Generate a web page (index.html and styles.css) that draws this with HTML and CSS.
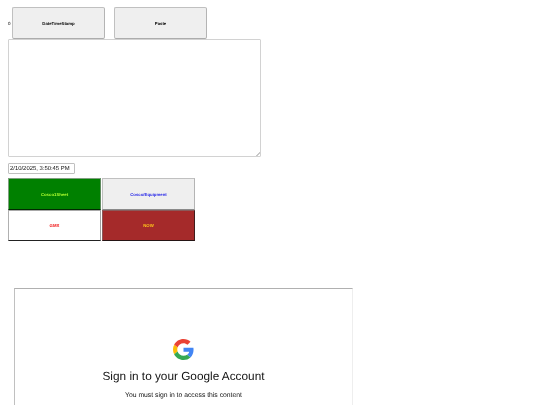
FILE: index.html
```html
<!DOCTYPE html>
<html lang="en">
<head>
<meta charset="utf-8">
<title>Tools</title>
<link rel="stylesheet" href="styles.css">
</head>
<body>
<main class="page">
  <div class="top-row">
    <span class="counter">0</span>
    <button class="btn btn-top">DateTimeStamp</button>
    <button class="btn btn-top">Paste</button>
  </div>
  <textarea class="notes"></textarea>
  <input class="stamp" type="text" value="2/10/2025, 3:50:45 PM">
  <div class="grid">
    <button class="btn cell green">Cosco1Sheet</button>
    <button class="btn cell grey">Cosco/Equipment</button>
    <button class="btn cell white">GMX</button>
    <button class="btn cell brown">NOW</button>
  </div>
  <section class="frame">
    <svg class="logo" viewBox="0 0 48 48" aria-hidden="true">
      <path fill="#EA4335" d="M24 9.5c3.54 0 6.71 1.22 9.21 3.6l6.85-6.85C35.9 2.38 30.47 0 24 0 14.62 0 6.51 5.38 2.56 13.22l7.98 6.19C12.43 13.72 17.74 9.5 24 9.5z"/>
      <path fill="#4285F4" d="M46.98 24.55c0-1.57-.15-3.09-.38-4.55H24v9.02h12.94c-.58 2.96-2.26 5.48-4.78 7.18l7.73 6c4.51-4.18 7.09-10.36 7.09-17.65z"/>
      <path fill="#FBBC05" d="M10.53 28.59c-.48-1.45-.76-2.99-.76-4.59s.27-3.14.76-4.59l-7.98-6.19C.92 16.46 0 20.12 0 24c0 3.88.92 7.54 2.56 10.78l7.97-6.19z"/>
      <path fill="#34A853" d="M24 48c6.48 0 11.93-2.13 15.89-5.81l-7.73-6c-2.15 1.45-4.92 2.3-8.16 2.3-6.26 0-11.57-4.22-13.47-9.91l-7.98 6.19C6.51 42.62 14.62 48 24 48z"/>
    </svg>
    <h1 class="title">Sign in to your Google Account</h1>
    <p class="sub">You must sign in to access this content</p>
  </section>
</main>
</body>
</html>
```
FILE: styles.css
```css
html, body {
  margin: 0;
  padding: 0;
  background: #fff;
  height: 405px;
  overflow: hidden;
}
body {
  font-family: "Liberation Sans", Arial, sans-serif;
  text-rendering: geometricPrecision;
}
.page {
  display: flex;
  flex-direction: column;
  align-items: flex-start;
  height: 405px;
  box-sizing: border-box;
  padding: 7px 0 0 8px;
  filter: blur(0.5px);
}
.top-row {
  display: flex;
  align-items: center;
  height: 32px;
}
.counter {
  font-size: 4.5px;
  width: 4px;
}
.btn {
  font-family: "Liberation Sans", Arial, sans-serif;
  font-size: 4.3px;
  font-weight: 700;
  text-rendering: geometricPrecision;
  box-sizing: border-box;
  padding: 0;
  background: #efefef;
  color: #000;
  border-width: 1px;
  border-style: solid;
  border-color: #c0c0c0 #b4b4b4 #acacac #c0c0c0;
  cursor: pointer;
}
.btn-top {
  width: 93px;
  height: 32px;
  border-radius: 2px;
  margin-right: 9px;
}
.notes {
  box-sizing: border-box;
  display: block;
  width: 253px;
  height: 118px;
  margin: 0;
  border: 1px solid #d2d2d2;
  border-radius: 1px;
  background: #fff;
}
.notes::-webkit-resizer {
  background: linear-gradient(135deg, transparent 55%, #c8c8c8 55%, #c8c8c8 70%, transparent 70%) no-repeat right bottom / 5px 5px;
}
.stamp {
  box-sizing: border-box;
  width: 67px;
  height: 11px;
  margin: 6px 0 0;
  padding: 0 1px;
  font-family: "Liberation Sans", Arial, sans-serif;
  font-size: 5.9px;
  text-rendering: geometricPrecision;
  color: #111;
  border: 1px solid #c0c0c0;
  border-radius: 1px;
}
.grid {
  display: grid;
  grid-template-columns: 93px 93px;
  grid-template-rows: 32px 31px;
  column-gap: 1px;
  margin-top: 4px;
}
.cell {
  width: 93px;
  height: 100%;
  border-width: 1px;
}
.green {
  background: #008000;
  color: #adff2f;
  border-color: #7f9f7f #5f8a5f #002a00 #7f9f7f;
}
.grey {
  background: #efefef;
  color: #2a2ae8;
  border-color: #c0c0c0 #b4b4b4 #8a8a8a #c0c0c0;
}
.white {
  background: #fff;
  color: #f01010;
  border-color: #a8a8a8 #a0a0a0 #222 #b0b0b0;
}
.brown {
  background: #a52a2a;
  color: #ffc61a;
  border-color: #8a5a5a #401c1c #241414 #8a5a5a;
}
.frame {
  box-sizing: border-box;
  width: 339px;
  height: 117px;
  margin: 47px 0 0 6px;
  padding-top: 50px;
  border: 1px solid #b0b0b0;
  border-left-color: #c0c0c0;
  border-right-color: #eee;
  border-bottom: 0;
  display: flex;
  flex-direction: column;
  align-items: center;
  background: #fff;
  overflow: hidden;
}
.logo {
  display: block;
  width: 21px;
  height: 21px;
}
.title {
  margin: 8px 0 0;
  font-size: 11.8px;
  font-weight: 400;
  line-height: 16px;
  color: #111;
}
.sub {
  margin: 7px 0 0;
  font-size: 6.8px;
  line-height: 9px;
  color: #111;
}
```
